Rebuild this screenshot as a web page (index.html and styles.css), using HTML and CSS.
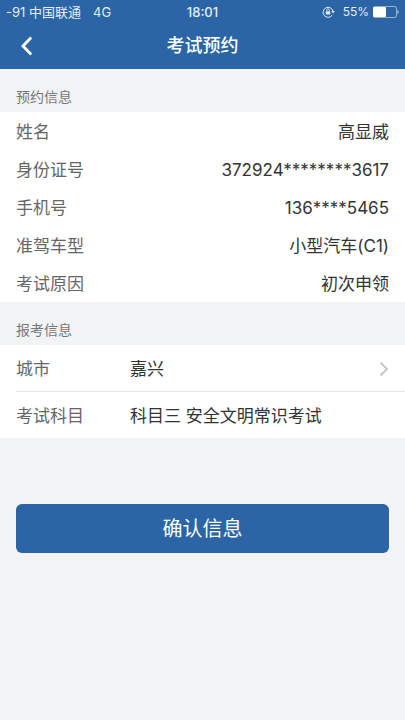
FILE: index.html
```html
<!DOCTYPE html>
<html lang="zh-CN">
<head>
<meta charset="utf-8">
<meta name="viewport" content="width=device-width, initial-scale=1">
<title>考试预约</title>
<link rel="stylesheet" href="styles.css">
</head>
<body>
<header class="top">
  <div class="status">
    <div class="status-left"><span>-91 中国联通</span><span>4G</span></div>
    <time class="clock">18:01</time>
    <div class="status-right">
      <svg class="lock" viewBox="0 0 13 12" aria-hidden="true">
        <path d="M10.2 9.2A5 5 0 1 1 11 5.2" fill="none" stroke="currentColor" stroke-width="1"/>
        <path d="M9.4 5h3.4l-1.7 2.4z" fill="currentColor"/>
        <rect x="3.8" y="5.2" width="4.4" height="3.4" rx=".4" fill="currentColor"/>
        <path d="M4.7 5.4V4.2a1.3 1.3 0 0 1 2.6 0v1.2" fill="none" stroke="currentColor" stroke-width=".9"/>
      </svg>
      <span>55%</span>
      <svg class="battery" viewBox="0 0 26 12" aria-hidden="true">
        <rect x=".5" y=".5" width="23" height="11" rx="1.5" fill="none" stroke="currentColor" stroke-opacity=".5"/>
        <rect x="0" y="1" width="13" height="10" rx="1" fill="currentColor"/>
        <path d="M24.6 4c1.2.4 1.2 3.6 0 4z" fill="currentColor"/>
      </svg>
    </div>
  </div>
  <nav class="bar">
    <button class="back" type="button" aria-label="返回">
      <svg viewBox="0 0 12 20" aria-hidden="true"><path d="M10.2 1.5 2 10l8.2 8.5" fill="none" stroke="currentColor" stroke-width="2.8"/></svg>
    </button>
    <h1 class="title">考试预约</h1>
  </nav>
</header>
<main>
  <section>
    <h2 class="heading">预约信息</h2>
    <dl class="details">
      <div class="detail"><dt>姓名</dt><dd>高显威</dd></div>
      <div class="detail"><dt>身份证号</dt><dd>372924********3617</dd></div>
      <div class="detail"><dt>手机号</dt><dd>136****5465</dd></div>
      <div class="detail"><dt>准驾车型</dt><dd>小型汽车(C1)</dd></div>
      <div class="detail"><dt>考试原因</dt><dd>初次申领</dd></div>
    </dl>
  </section>
  <section>
    <h2 class="heading">报考信息</h2>
    <div class="fields">
      <button class="field" type="button">
        <span class="label">城市</span>
        <span class="value">嘉兴</span>
        <svg class="chevron" viewBox="0 0 10 16" aria-hidden="true"><path d="M1.5 1.5 8 8l-6.5 6.5" fill="none" stroke="currentColor" stroke-width="2"/></svg>
      </button>
      <div class="field">
        <span class="label">考试科目</span>
        <span class="value">科目三 安全文明常识考试</span>
      </div>
    </div>
  </section>
  <div class="actions"><button class="confirm" type="button">确认信息</button></div>
</main>
</body>
</html>
```
FILE: styles.css
```css
* { box-sizing: border-box; }

body {
  margin: 0;
  min-height: 100vh;
  background: #f1f3f5;
  color: #333;
  font: 17px/24px Inter, "Noto Sans CJK SC", sans-serif;
}

button {
  border: 0;
  background: none;
  color: inherit;
  font: inherit;
  cursor: pointer;
}

svg { display: block; }

.top {
  background: #2b65a6;
  color: #fff;
}

.status {
  display: grid;
  grid-template-columns: 1fr auto 1fr;
  align-items: center;
  height: 22px;
  padding: 0 6px;
  font-size: 12px;
  color: #e3edf8;
}

.status-left { display: flex; gap: 12px; font-size: 13px; }

.clock { font-size: 13px; font-weight: 500; }

.status-right {
  display: flex;
  align-items: center;
  justify-content: flex-end;
  gap: 4px;
}

.lock { width: 13px; height: 12px; margin-right: 4px; }

.battery { width: 26px; height: 12px; color: #fff; }

.bar {
  display: grid;
  grid-template-columns: 48px 1fr 48px;
  align-items: center;
  height: 47px;
}

.back {
  display: grid;
  place-items: center start;
  height: 44px;
  padding: 0 0 0 21px;
}

.back svg { width: 12px; height: 20px; }

.title {
  margin: 0;
  font-size: 18px;
  font-weight: 500;
  text-align: center;
}

.heading {
  margin: 0;
  padding: 18px 16px 5px;
  font-size: 14px;
  font-weight: 400;
  line-height: 20px;
  color: #777;
}

.details {
  margin: 0;
  background: #fff;
}

.detail {
  display: flex;
  justify-content: space-between;
  padding: 8px 16px 6px;
}

dt, .label { color: #666; }

dd { margin: 0; }

.fields {
  padding-left: 16px;
  background: #fff;
}

.field {
  display: grid;
  grid-template-columns: 114px 1fr auto;
  align-items: center;
  width: 100%;
  padding: 12px 16px 10px 0;
  text-align: left;
}

.field + .field { border-top: 1px solid #e1e6e9; }

.chevron { width: 10px; height: 16px; color: #c4c6c9; }

.actions { padding: 66px 16px 24px; }

.confirm {
  width: 100%;
  padding: 13px 12px 12px;
  border-radius: 6px;
  background: #2b65a6;
  color: #fff;
  font-size: 20px;
}
```
